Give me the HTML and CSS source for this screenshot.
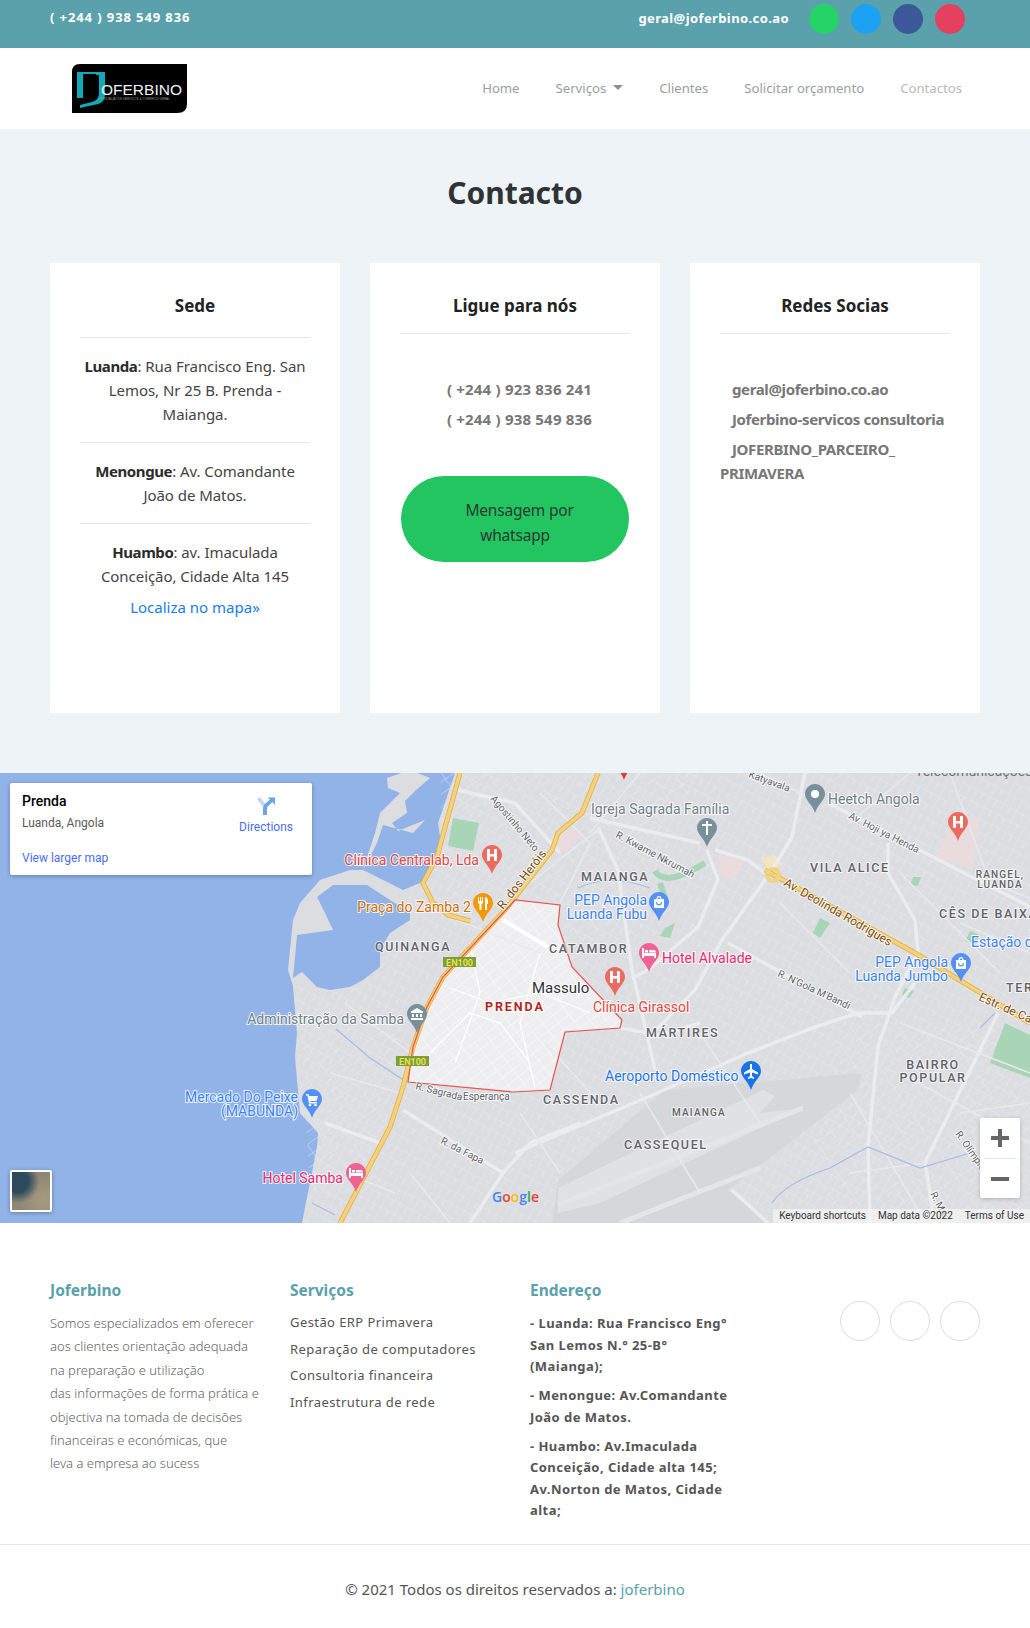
FILE: index.html
```html
<!DOCTYPE html>
<html lang="pt">
<head>
<meta charset="utf-8">
<title>Contacto - Joferbino</title>
<link rel="stylesheet" href="styles.css">
</head>
<body>
<header class="topbar">
  <span class="topbar-phone">( +244 ) 938 549 836</span>
  <div class="topbar-right">
    <span class="topbar-mail">geral@joferbino.co.ao</span>
    <span class="dot dot-green"></span>
    <span class="dot dot-blue"></span>
    <span class="dot dot-navy"></span>
    <span class="dot dot-red"></span>
  </div>
</header>
<nav class="nav">
  <svg class="logo" width="115" height="49" viewBox="0 0 115 49">
    <path class="logo-bg" d="M8 0H115V40Q115 49 105 49H0V8Q0 0 8 0Z"/>
    <path class="logo-j" d="M5 8H33V30Q33 38 26 40L8 44V41L20 38Q27 36 27 29V11H24V10H11V34H5Z"/>
    <text class="logo-name" x="29" y="31">OFERBINO</text>
    <text class="logo-tag" x="27" y="36">PRESTAÇÃO DE SERVIÇOS &amp; COMÉRCIO GERAL</text>
  </svg>
  <ul class="nav-links">
    <li><a class="nav-link">Home</a></li>
    <li><a class="nav-link">Serviços<span class="caret"></span></a></li>
    <li><a class="nav-link">Clientes</a></li>
    <li><a class="nav-link">Solicitar orçamento</a></li>
    <li><a class="nav-link nav-link-muted">Contactos</a></li>
  </ul>
</nav>
<main class="contact">
  <h1 class="contact-title">Contacto</h1>
  <div class="cards">
    <article class="card">
      <h3 class="card-title card-title-tall">Sede</h3>
      <p class="place"><b>Luanda</b>: Rua Francisco Eng. San Lemos, Nr 25 B. Prenda - Maianga.</p>
      <p class="place"><b>Menongue</b>: Av. Comandante<br>João de Matos.</p>
      <p class="place place-last"><b>Huambo</b>: av. Imaculada Conceição, Cidade Alta 145</p>
      <a class="map-link">Localiza no mapa»</a>
    </article>
    <article class="card">
      <h3 class="card-title">Ligue para nós</h3>
      <div class="card-list card-list-center">
        <p class="strong-line strong-phone">( +244 ) 923 836 241</p>
        <p class="strong-line strong-phone">( +244 ) 938 549 836</p>
      </div>
      <a class="whatsapp"><span class="whatsapp-first">Mensagem por</span> whatsapp</a>
    </article>
    <article class="card">
      <h3 class="card-title">Redes Socias</h3>
      <div class="card-list">
        <p class="strong-line indented">geral@joferbino.co.ao</p>
        <p class="strong-line indented">Joferbino-servicos consultoria</p>
        <p class="strong-line indented">JOFERBINO_PARCEIRO_ PRIMAVERA</p>
      </div>
    </article>
  </div>
</main>
<section class="map">
  <svg class="map-canvas" width="1030" height="450" viewBox="0 0 1030 450">
    <defs>
      <pattern id="streets" width="15" height="12" patternUnits="userSpaceOnUse" patternTransform="rotate(28)">
        <path class="m-grid" d="M0 0H15M0 0V12M8 0V6"/>
      </pattern>
      <pattern id="streets2" width="19" height="10" patternUnits="userSpaceOnUse" patternTransform="rotate(-35)">
        <path class="m-grid" d="M0 0H19M0 0V10"/>
      </pattern>
      <pattern id="streetsLight" width="13" height="9" patternUnits="userSpaceOnUse" patternTransform="rotate(-38)">
        <path class="m-grid-light" d="M0 0H13M0 0V9"/>
      </pattern>
      <symbol id="pin" viewBox="0 0 20 29" overflow="visible">
        <path d="M10 0C15.5 0 20 4.500 20 10C20 16 13 20 10 29C7 20 0 16 0 10C0 4.500 4.500 0 10 0Z"/>
      </symbol>
      <symbol id="g-h" viewBox="0 0 20 29"><path class="m-glyph" d="M5 4H8V9H12V4H15V16H12V11.500H8V16H5Z"/></symbol>
      <symbol id="g-fork" viewBox="0 0 20 29"><path class="m-glyph" d="M5 4H6V8H7V4H8V8H9V4H10V9Q10 11 8.500 11V17H6.500V11Q5 11 5 9ZM12 4Q15 4 15 9V11H14V17H12Z"/></symbol>
      <symbol id="g-bank" viewBox="0 0 20 29"><path class="m-glyph" d="M10 4L16 7.500V9H4V7.500ZM5 10H7V13H5ZM9 10H11V13H9ZM13 10H15V13H13ZM4 14H16V16H4Z"/></symbol>
      <symbol id="g-cart" viewBox="0 0 20 29"><path class="m-glyph" d="M4 5H6.500L7 7H16L14.500 12H8L8.300 13H15V14.500H7L5.500 6.500H4Z"/><circle class="m-glyph" cx="8" cy="16" r="1.300"/><circle class="m-glyph" cx="13.500" cy="16" r="1.300"/></symbol>
      <symbol id="g-bed" viewBox="0 0 20 29"><path class="m-glyph" d="M3 5H5V10H17V15H15V13H5V15H3ZM6 7H9V9.500H6ZM10 7H15Q17 7 17 9.500H10Z"/></symbol>
      <symbol id="g-cross" viewBox="0 0 20 29"><path class="m-glyph" d="M9 3H11V6H15V8H11V17H9V8H5V6H9Z"/></symbol>
      <symbol id="g-dot" viewBox="0 0 20 29"><circle class="m-glyph" cx="10" cy="10" r="4"/></symbol>
      <symbol id="g-bag" viewBox="0 0 20 29"><path class="m-glyph" d="M5 7H7.500Q7.500 4 10 4Q12.500 4 12.500 7H15V16H5ZM8.700 7H11.300Q11.300 5.200 10 5.200Q8.700 5.200 8.700 7ZM7 10Q7 13.500 10 13.500Q13 13.500 13 10H12Q12 12.300 10 12.300Q8 12.300 8 10Z"/></symbol>
      <symbol id="g-plane" viewBox="0 0 20 29"><path class="m-glyph" d="M9 3H11V8L17 11.500V13.500L11 11.500V15L13 16.500V18L10 17L7 18V16.500L9 15V11.500L3 13.500V11.500L9 8Z"/></symbol>
    </defs>

    <rect class="m-water" width="1030" height="450"/>
    <path class="m-land" d="M302 450L317 374L318 360L300 340L295 284L297 260L293 213L288 197L293 147L300 130L320 107L350 97L363 97L377 70L383 52L413 60L425 47L398 58L392 50L407 40L405 28L415 18L430 5L410 -3L387 5L388 15L400 20L380 40L375 60L363 97L403 117L420 110L430 95L441 70L438 50L445 30L455 0H1030V450Z"/>
    <path class="m-street-fill" d="M302 450L317 374L318 360L300 340L295 284L297 260L293 213L330 217L380 194L410 147L403 117L420 110L430 95L441 70L438 50L445 30L455 0H1030V450Z"/>
    <path class="m-street-fill2" d="M440 0H700L600 200L450 150Z M840 250H1030V450H800Z M300 240L400 240L380 420L310 420Z"/>
    <path class="m-water" d="M317 124L325 140L333 157L297 162L295 184L293 205L302 199L317 214L330 217L350 214L363 207L380 194L380 177L390 160L410 147L410 140L367 112L333 112Z"/>

    <path class="m-airport" d="M558 407L665 317L862 300L858 317L728 417L768 450H552Z"/>
    <path class="m-apron" d="M558 415L763 317L775 323L760 340L803 335L600 430L558 440Z"/>
    <path class="m-runway" d="M558 432L803 335M620 450L760 395"/>

    <path class="m-prenda" d="M503 140L515 127L560 132L558 152L572 194L622 247L620 255L565 259L550 317L513 319L408 309L413 274L427 234L443 204Z"/>
    <path class="m-prenda-grid" d="M503 140L515 127L560 132L558 152L572 194L622 247L620 255L565 259L550 317L513 319L408 309L413 274L427 234L443 204Z"/>
    <path class="m-prenda-road" d="M430 280L470 240L500 250L530 290M450 215L490 230L540 220L590 240M470 170L480 220L455 290M540 180L520 250L535 315"/>
    <path class="m-prenda-main" d="M503 147L548 174"/>

    <path class="m-green" d="M453 45L479 50L473 78L448 73Z"/>
    <path class="m-green" d="M1005 250L1030 262V305L990 290Z"/>
    <path class="m-green" d="M820 145L830 150L820 165L813 160Z M913 104L921 104L918 113L910 112Z M970 158L980 162L975 172L965 168Z M905 215L914 218L909 225L902 222Z M665 155L675 150L670 165L660 163Z"/>
    <path class="m-green-line" d="M655 98Q665 115 705 90 M660 110L665 125"/>
    <path class="m-pink" d="M955 45L980 45L973 95L935 85Z M718 82L745 88L735 105L722 105Z M560 55L580 60L565 80L555 75Z"/>
    <path class="m-sand" d="M760 85L775 82L783 92L768 97Z"/>

    <g class="m-road-wide">
      <path d="M805 0L792 64L772 97L722 167L695 217L648 265"/>
      <path d="M715 77L748 87L765 100"/>
      <path d="M707 77L718 107L698 154L648 197L632 205"/>
      <path d="M598 54L618 97L632 197L655 297"/>
      <path d="M515 380L648 324L748 280L815 254L858 240L892 240L915 210"/>
      <path d="M728 170L862 244"/>
      <path d="M888 70L888 100L915 147L918 180L895 224L878 274L868 374L870 450"/>
      <path d="M828 30L1030 134"/>
      <path d="M998 240L925 390L935 450"/>
      <path d="M732 417L768 450"/>
      <path d="M403 337L503 400L470 450"/>
      <path d="M503 400L530 370L580 350"/>
      <path d="M325 350L380 370"/>
      <path d="M457 17L515 30L560 80"/>
      <path d="M620 255L660 262L700 250"/>
      <path d="M590 45L700 70"/>
    </g>
    <g class="m-road">
      <path d="M540 20L590 70L560 130M600 55L530 110M640 0L590 60M760 0L820 30M850 50L910 0M950 0L990 110L1030 125M960 150L1030 180M900 250L1030 300M1000 200L900 100M780 130L850 200M640 320L700 420M700 260L760 350M850 320L920 440M960 340L1030 330M850 400L925 390M545 270L600 330M440 140L540 180M345 230L410 280M330 300L400 320M410 400L450 450M345 400L395 420M900 300L1030 370M520 340L560 400"/>
    </g>
    <path class="m-river" d="M336 256L370 285L405 308"/>
    <path class="m-river" d="M772 430Q785 410 830 395L868 374L920 395L970 380"/>
    <path class="m-river" d="M578 115Q610 100 650 115M995 240L980 255"/>
    <path class="m-river" d="M312 430L335 442"/>

    <path class="m-hw-edge" d="M460 0L447 47L437 84L423 110L433 130L448 142L470 148"/>
    <path class="m-hw-edge" d="M598 0L582 40L558 60L552 77L505 137L443 204L427 234L413 274L403 314L390 354L340 450"/>
    <path class="m-hw" d="M460 0L447 47L437 84L423 110L433 130L448 142L470 148"/>
    <path class="m-hw" d="M598 0L582 40L558 60L552 77L505 137L443 204L427 234L413 274L403 314L390 354L340 450"/>
    <path class="m-hw-edge" d="M765 97L915 180L1030 250"/>
    <path class="m-hw" d="M765 97L915 180L1030 250"/>
    <circle class="m-rbt" cx="773" cy="102" r="6"/>
    <path class="m-border" d="M503 140L515 127L560 132L558 152L572 194L622 247L620 255L565 259L550 317L513 319L408 309L413 274L427 234L443 204Z"/>

    <rect class="m-shield" x="443" y="184" width="33" height="10"/><text class="m-shield-t" x="459.500" y="192.500">EN100</text>
    <rect class="m-shield" x="396" y="283" width="33" height="10"/><text class="m-shield-t" x="412.500" y="291.500">EN100</text>

    <g class="m-area">
      <text x="375" y="178">QUINANGA</text>
      <text x="581" y="108">MAIANGA</text>
      <text x="549" y="180">CATAMBOR</text>
      <text x="646" y="264">MÁRTIRES</text>
      <text x="543" y="331">CASSENDA</text>
      <text x="624" y="376">CASSEQUEL</text>
      <text x="810" y="99">VILA ALICE</text>
      <text x="939" y="145">CÊS DE BAIXA</text>
      <text x="1006" y="219">TER</text>
      <text class="m-mid" x="933" y="296">BAIRRO</text>
      <text class="m-mid" x="933" y="309">POPULAR</text>
      <text class="m-small m-mid" x="1000" y="105">RANGEL,</text>
      <text class="m-small m-mid" x="1000" y="115">LUANDA</text>
      <text class="m-small" x="672" y="343">MAIANGA</text>
    </g>
    <text class="m-prenda-t" x="485" y="238">PRENDA</text>
    <text class="m-massulo" x="532" y="220">Massulo</text>

    <g class="m-street-t">
      <text transform="translate(490 26) rotate(50)">Agostinho Neto</text>
      <text transform="translate(415 316) rotate(14)">R. Sagrada</text>
      <text x="463" y="327">Esperança</text>
      <text transform="translate(440 370) rotate(27)">R. da Fapa</text>
      <text transform="translate(615 64) rotate(28)">R. Kwame Nkrumah</text>
      <text transform="translate(748 4) rotate(20)">Katyavala</text>
      <text transform="translate(848 45) rotate(27)">Av. Hoji ya Henda</text>
      <text transform="translate(777 203) rotate(25)">R. N'Gola M'Bandi</text>
      <text transform="translate(955 361) rotate(55)">R. Olímpio</text>
      <text transform="translate(930 421) rotate(62)">R. Mar</text>
    </g>
    <g class="m-road-t">
      <text transform="translate(503 137) rotate(-52)">R. dos Heróis</text>
      <text transform="translate(783 112) rotate(30)">Av. Deolinda Rodrigues</text>
      <text transform="translate(978 227) rotate(24)">Estr. de Camama</text>
    </g>
    <text class="m-poi-top" x="915" y="3">Telecomunicações</text>

    <g class="m-poi">
      <text class="m-end t-red" x="479" y="92">Clínica Centralab, Lda</text>
      <text class="m-end t-orange" x="471" y="139">Praça do Zamba 2</text>
      <text class="m-end t-grey" x="404" y="251">Administração da Samba</text>
      <text class="m-end t-blue m-tight" x="298" y="329">Mercado Do Peixe</text>
      <text class="m-end t-blue m-tight" x="298" y="343">(MABUNDA)</text>
      <text class="m-end t-pink" x="343" y="410">Hotel Samba</text>
      <text class="t-grey" x="591" y="41">Igreja Sagrada Família</text>
      <text class="t-grey" x="828" y="31">Heetch Angola</text>
      <text class="m-end t-blue m-tight" x="647" y="132">PEP Angola</text>
      <text class="m-end t-blue m-tight" x="647" y="146">Luanda Fubu</text>
      <text class="t-blue" x="971" y="174">Estação do</text>
      <text class="t-pink" x="662" y="190">Hotel Alvalade</text>
      <text class="t-red" x="593" y="239">Clínica Girassol</text>
      <text class="m-end t-blue m-tight" x="948" y="194">PEP Angola</text>
      <text class="m-end t-blue m-tight" x="948" y="208">Luanda Jumbo</text>
      <text class="t-airport" x="605" y="308">Aeroporto Doméstico</text>
    </g>

    <use class="p-red" href="#pin" x="482" y="72" width="20" height="29"/><use href="#g-h" x="482" y="72" width="20" height="29"/>
    <use class="p-orange" href="#pin" x="473" y="120" width="20" height="29"/><use href="#g-fork" x="473" y="120" width="20" height="29"/>
    <use class="p-grey" href="#pin" x="407" y="231" width="20" height="29"/><use href="#g-bank" x="407" y="231" width="20" height="29"/>
    <use class="p-blue" href="#pin" x="302" y="316" width="20" height="29"/><use href="#g-cart" x="302" y="316" width="20" height="29"/>
    <use class="p-pink" href="#pin" x="346" y="390" width="20" height="29"/><use href="#g-bed" x="346" y="390" width="20" height="29"/>
    <use class="p-grey" href="#pin" x="697" y="45" width="20" height="29"/><use href="#g-cross" x="697" y="45" width="20" height="29"/>
    <use class="p-grey" href="#pin" x="805" y="11" width="20" height="29"/><use href="#g-dot" x="805" y="11" width="20" height="29"/>
    <use class="p-red" href="#pin" x="948" y="39" width="20" height="29"/><use href="#g-h" x="948" y="39" width="20" height="29"/>
    <use class="p-blue" href="#pin" x="649" y="119" width="20" height="29"/><use href="#g-bag" x="649" y="119" width="20" height="29"/>
    <use class="p-pink" href="#pin" x="639" y="170" width="20" height="29"/><use href="#g-bed" x="639" y="170" width="20" height="29"/>
    <use class="p-red" href="#pin" x="605" y="194" width="20" height="29"/><use href="#g-h" x="605" y="194" width="20" height="29"/>
    <use class="p-airport" href="#pin" x="741" y="288" width="20" height="29"/><use href="#g-plane" x="741" y="288" width="20" height="29"/>
    <use class="p-blue" href="#pin" x="951" y="180" width="20" height="29"/><use href="#g-bag" x="951" y="180" width="20" height="29"/>
    <use class="p-red-dark" href="#pin" x="614" y="-22" width="20" height="29"/>
    <circle class="p-orange" cx="293" cy="459" r="9"/>

    <text class="m-google" x="492" y="429"><tspan class="g-b">G</tspan><tspan class="g-r">o</tspan><tspan class="g-y">o</tspan><tspan class="g-b">g</tspan><tspan class="g-g">l</tspan><tspan class="g-r">e</tspan></text>
  </svg>

  <aside class="map-info">
    <div class="map-info-text">
      <div class="map-info-name">Prenda</div>
      <div class="map-info-addr">Luanda, Angola</div>
      <a class="map-info-link">View larger map</a>
    </div>
    <a class="map-dir">
      <svg class="map-dir-icon" width="20" height="20" viewBox="0 0 20 20">
        <path class="dir-light" d="M1 3L4 1L11 10V19H7V11Z"/>
        <path class="dir-blue" d="M7 19V12Q7 9 10 7L14 3.500L11.500 1.500H19V9L16.500 6L11 11V19Z"/>
      </svg>
      <span>Directions</span>
    </a>
  </aside>
  <div class="map-thumb"></div>
  <div class="map-zoom">
    <svg class="map-zoom-btn" width="40" height="40" viewBox="0 0 40 40"><path class="zoom-glyph" d="M18 11H22V18H29V22H22V29H18V22H11V18H18Z"/></svg>
    <span class="map-zoom-sep"></span>
    <svg class="map-zoom-btn" width="40" height="40" viewBox="0 0 40 40"><path class="zoom-glyph" d="M11 19H29V23H11Z"/></svg>
  </div>
  <div class="map-attr">
    <span>Keyboard shortcuts</span>
    <span>Map data ©2022</span>
    <span>Terms of Use</span>
  </div>
</section>
<footer class="footer">
  <div class="footer-grid">
    <div>
      <h4 class="footer-head">Joferbino</h4>
      <p class="footer-about">Somos especializados em oferecer<br>aos clientes orientação adequada<br>na preparação e utilização<br>das informações de forma prática e<br>objectiva na tomada de decisões<br>financeiras e económicas, que<br>leva a empresa ao sucess</p>
    </div>
    <div>
      <h4 class="footer-head">Serviços</h4>
      <ul class="footer-links">
        <li>Gestão ERP Primavera</li>
        <li>Reparação de computadores</li>
        <li>Consultoria financeira</li>
        <li>Infraestrutura de rede</li>
      </ul>
    </div>
    <div class="footer-address">
      <h4 class="footer-head">Endereço</h4>
      <p class="footer-addr">- Luanda: Rua Francisco Eng° San Lemos N.° 25-B° (Maianga);</p>
      <p class="footer-addr">- Menongue: Av.Comandante João de Matos.</p>
      <p class="footer-addr">- Huambo: Av.Imaculada Conceição, Cidade alta 145; Av.Norton de Matos, Cidade alta;</p>
    </div>
    <div class="footer-social">
      <span class="ring"></span>
      <span class="ring"></span>
      <span class="ring"></span>
    </div>
  </div>
  <div class="footer-copy">© 2021 Todos os direitos reservados a: <a class="footer-copy-link">joferbino</a></div>
</footer>
</body>
</html>
```
FILE: styles.css
```css
* { box-sizing: border-box; }
html, body { margin: 0; padding: 0; }
body {
  font-family: "Noto Sans", "Open Sans", sans-serif;
  font-size: 16px;
  color: #444;
  background: #fff;
}
h1, h3, h4, p, ul { margin: 0; padding: 0; }
ul { list-style: none; }

/* top bar */
.topbar {
  height: 48px;
  background: #5aa1ac;
  padding: 0 65px 0 50px;
  display: flex;
  justify-content: space-between;
  align-items: flex-start;
  color: #fff;
  font-size: 13px;
  font-weight: 700;
}
.topbar-phone { line-height: 35px; letter-spacing: .9px; }
.topbar-right { display: flex; align-items: center; gap: 12px; padding-top: 4px; }
.topbar-mail { margin-right: 8px; line-height: 28px; height: 30px; letter-spacing: .4px; }
.dot { width: 30px; height: 30px; border-radius: 50%; }
.dot-green { background: #25d366; }
.dot-blue { background: #1da1f2; }
.dot-navy { background: #3b5998; }
.dot-red { background: #e4405f; }

/* nav */
.nav {
  height: 81px;
  background: #fff;
  padding: 0 68px 0 72px;
  display: flex;
  justify-content: space-between;
  align-items: center;
}
.logo { display: block; }
.logo-bg { fill: #000; }
.logo-j { fill: #0fa9b8; }
.logo-name { fill: #f2f2f2; font-family: "Liberation Sans", sans-serif; font-size: 15.500px; }
.logo-tag { fill: #9a9a9a; font-family: "Liberation Sans", sans-serif; font-size: 3px; }
.nav-links { display: flex; gap: 36px; font-size: 13.150px; padding-bottom: 2px; }
.nav-link { color: #9a9ea2; display: flex; align-items: center; }
.nav-link-muted { color: #b9bbbe; }
.caret {
  width: 0; height: 0; margin-left: 7px;
  border-top: 5px solid #8d9195;
  border-left: 5px solid transparent;
  border-right: 5px solid transparent;
}

/* contact */
.contact { background: #eef3f7; height: 644px; padding: 0 50px; }
.contact-title {
  height: 134px;
  padding-top: 39px;
  text-align: center;
  font-size: 30px;
  line-height: 50px;
  font-weight: 700;
  color: #2f3336;
}
.cards { display: grid; grid-template-columns: repeat(3, 290px); gap: 30px; }
.card { background: #fff; height: 450px; padding: 0 30px; text-align: center; }
.card-title {
  height: 71px;
  padding-top: 30px;
  font-size: 17px;
  line-height: 26px;
  font-weight: 700;
  color: #222;
  border-bottom: 1px solid #e4e5e6;
}
.card-title-tall { height: 75px; }
.place { font-size: 15px; line-height: 24px; color: #444; padding: 16px 0; border-bottom: 1px solid #e4e5e6; letter-spacing: -.05px; }
.place b { color: #2b2b2b; letter-spacing: -.4px; }
.place-last { border-bottom: 0; padding-bottom: 7px; }
.map-link { display: block; font-size: 15px; line-height: 24px; color: #1a7ce8; }
.card-list { padding-top: 43px; text-align: left; }
.card-list-center { text-align: center; padding-left: 9px; }
.strong-line { font-size: 15px; line-height: 24px; margin-bottom: 6px; font-weight: 700; color: #777; letter-spacing: -.37px; }
.strong-phone { letter-spacing: .2px; }
.indented { text-indent: 12px; }
.whatsapp {
  display: block;
  width: 228px;
  height: 86px;
  margin: 45px 0 0 1px;
  padding: 22px 30px 0;
  border-radius: 43px;
  background: #22c55f;
  color: #2b3a31;
  font-size: 15.500px;
  line-height: 25px;
  text-align: center;
  letter-spacing: -.2px;
}
.whatsapp-first { margin-left: 9px; }

/* map */
.map { position: relative; height: 450px; overflow: hidden; font-family: Roboto, sans-serif; }
.map-canvas { display: block; font-family: Roboto, sans-serif; }
.m-water { fill: #91b3e8; }
.m-land { fill: #dcdde1; }
.m-street-fill { fill: url(#streets); }
.m-street-fill2 { fill: url(#streets2); }
.m-grid { fill: none; stroke: #e8e9eb; stroke-width: .8; }
.m-grid-light { fill: none; stroke: #fff; stroke-width: .8; }
.m-airport { fill: #d6d7da; }
.m-apron { fill: #e0e1e4; }
.m-runway { fill: none; stroke: #e4e5e7; stroke-width: 5; }
.m-prenda { fill: #eeeef1; }
.m-prenda-grid { fill: url(#streetsLight); }
.m-prenda-road { fill: none; stroke: #fff; stroke-width: 1.200; }
.m-prenda-main { fill: none; stroke: #fff; stroke-width: 4; }
.m-green { fill: #a8d5b5; }
.m-green-line { fill: none; stroke: #a8d5b5; stroke-width: 6; }
.m-pink { fill: #eadcdc; }
.m-sand { fill: #f0e6c4; }
.m-road-wide path { fill: none; stroke: #ebecee; stroke-width: 3.500; }
.m-road path { fill: none; stroke: #e8e9eb; stroke-width: 1.500; }
.m-river { fill: none; stroke: #a4bde8; stroke-width: 1.200; }
.m-hw { fill: none; stroke: #f3d27f; stroke-width: 3.500; }
.m-hw-edge { fill: none; stroke: #e8ad3c; stroke-width: 5; }
.m-rbt { fill: none; stroke: #f3d27f; stroke-width: 4; }
.m-border { fill: none; stroke: #e8504a; stroke-width: 1.200; }
.m-shield { fill: #7c9f3d; }
.m-shield-t { fill: #f7e64a; font-size: 9px; font-weight: 500; text-anchor: middle; }
.m-area text { fill: #5f6368; font-size: 12.500px; font-weight: 500; letter-spacing: 1.600px; paint-order: stroke; stroke: #fff; stroke-width: 2px; stroke-opacity: .7; }
.m-area .m-small { font-size: 10px; letter-spacing: 1.200px; }
.m-mid { text-anchor: middle; }
.m-prenda-t { fill: #b3261e; font-size: 12.500px; font-weight: 700; letter-spacing: 1.900px; paint-order: stroke; stroke: #fff; stroke-width: 2px; }
.m-massulo { fill: #2f3134; font-size: 15px; paint-order: stroke; stroke: #fff; stroke-width: 2px; }
.m-street-t text { fill: #5f6368; font-size: 10px; paint-order: stroke; stroke: #fff; stroke-width: 2px; stroke-opacity: .8; }
.m-road-t text { fill: #7a4e12; font-size: 12px; paint-order: stroke; stroke: #fff; stroke-width: 2px; stroke-opacity: .8; }
.m-poi-top { fill: #70757a; font-size: 14px; }
.m-poi text { font-size: 14px; paint-order: stroke; stroke: #fff; stroke-width: 2px; stroke-opacity: .85; }
.m-end { text-anchor: end; }
.t-red { fill: #e0453c; }
.t-orange { fill: #c9700f; }
.t-grey { fill: #6f7f88; }
.t-blue { fill: #3a82ee; }
.t-pink { fill: #e5286e; }
.t-airport { fill: #1a73e8; }
.p-red { fill: #ec6a5e; }
.p-red-dark { fill: #e53935; }
.p-orange { fill: #f29900; }
.p-grey { fill: #78909c; }
.p-blue { fill: #5491f5; }
.p-pink { fill: #f06292; }
.p-airport { fill: #1a73e8; }
.m-glyph { fill: #fff; }
.m-google { font-family: "Open Sans", sans-serif; font-size: 14px; font-weight: 600; }
.g-b { fill: #4285f4; }
.g-r { fill: #ea4335; }
.g-y { fill: #fbbc05; }
.g-g { fill: #34a853; }

.map-info {
  position: absolute;
  left: 10px; top: 10px;
  width: 302px; height: 92px;
  background: #fff;
  border-radius: 2px;
  box-shadow: 0 1px 4px rgba(0,0,0,.3);
  display: flex;
  justify-content: space-between;
  padding: 9px 19px 0 12px;
}
.map-info-name { font-size: 14px; font-weight: 500; line-height: 18px; color: #000; }
.map-info-addr { font-size: 12px; line-height: 16px; margin-top: 5px; color: #5b5b5b; }
.map-info-link { display: block; margin-top: 19px; font-size: 12px; line-height: 16px; color: #4a6ef0; }
.map-dir { display: flex; flex-direction: column; align-items: center; font-size: 12px; color: #4a6ef0; padding-top: 4px; }
.map-dir-icon { display: block; margin-bottom: 4px; }
.dir-light { fill: #c0d9f7; }
.dir-blue { fill: #6aa5ec; }
.map-thumb {
  position: absolute;
  left: 10px; top: 397px;
  width: 42px; height: 42px;
  border: 2px solid #fff;
  border-radius: 2px;
  box-shadow: 0 1px 4px rgba(0,0,0,.3);
  background: radial-gradient(circle at 15% 25%, #2c4a5c 0 25%, transparent 50%), radial-gradient(circle at 85% 75%, #a89a80, #8d8775 60%), #8c8a7a;
}
.map-zoom {
  position: absolute;
  right: 10px; top: 345px;
  width: 40px; height: 80px;
  background: #fff;
  border-radius: 2px;
  box-shadow: 0 1px 4px rgba(0,0,0,.2);
  display: flex;
  flex-direction: column;
  align-items: center;
}
.map-zoom-btn { display: block; }
.map-zoom-sep { position: absolute; top: 40px; left: 5px; width: 30px; height: 1px; background: #e6e6e6; }
.zoom-glyph { fill: #666; }
.map-attr {
  position: absolute;
  right: 0; bottom: 0;
  height: 14px;
  display: flex;
  gap: 12px;
  padding: 0 6px;
  background: rgba(245,245,245,.7);
  font-size: 10px;
  line-height: 14px;
  color: #333;
}

/* footer */
.footer { height: 405px; background: #fff; }
.footer-grid {
  height: 322px;
  padding: 55px 50px 0;
  display: grid;
  grid-template-columns: repeat(4, 210px);
  gap: 30px;
  border-bottom: 1px solid #e4e5e6;
}
.footer-head { font-size: 15.500px; line-height: 24px; font-weight: 700; color: #5aa1ac; }
.footer-about { margin-top: 10px; font-size: 13px; font-weight: 300; line-height: 23.400px; color: #666; }
.footer-links { margin-top: 7px; font-size: 13px; line-height: 26.600px; color: #555; letter-spacing: .42px; }
.footer-address { max-width: 200px; }
.footer-addr { margin-top: 7.500px; font-size: 13px; font-weight: 700; line-height: 21.500px; color: #555; letter-spacing: .45px; }
.footer-head + .footer-addr { margin-top: 11px; }
.footer-social { display: flex; justify-content: flex-end; gap: 10px; padding-top: 23px; }
.ring { width: 40px; height: 40px; border-radius: 50%; border: 1px solid #ddd; }
.footer-copy { padding-top: 32px; text-align: center; font-size: 15px; line-height: 24px; color: #555; }
.footer-copy-link { color: #5aa1ac; }
```
